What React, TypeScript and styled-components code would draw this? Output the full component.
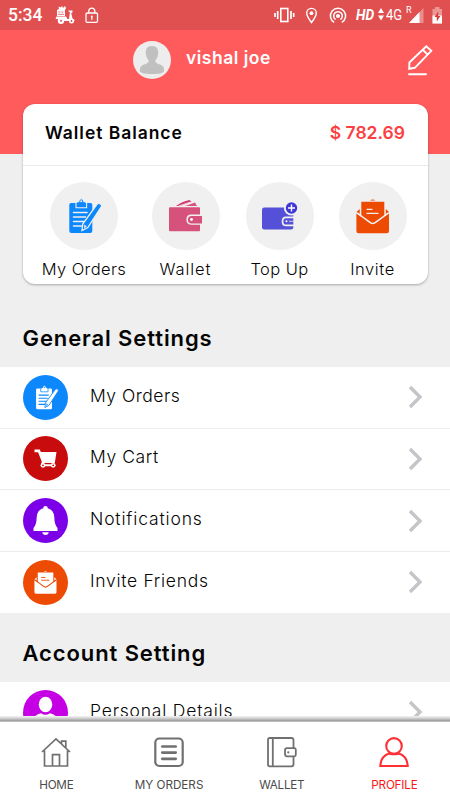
import React from 'react';
import styled, { createGlobalStyle } from 'styled-components';

const GlobalStyle = createGlobalStyle`
  * { box-sizing: border-box; }
  body { margin: 0; background: #efefef; font-family: Inter, "Open Sans", sans-serif; color: #050505; }
  svg { display: block; flex: none; }
`;

const Screen = styled.div`
  width: 450px;
  height: 800px;
  overflow: hidden;
  display: flex;
  flex-direction: column;
  background: #efefef;
`;

const StatusBar = styled.div`
  flex: none;
  height: 30px;
  background: #e05050;
  color: #fff;
  display: flex;
  align-items: center;
  justify-content: space-between;
  padding: 0 7px 0 8px;
`;
const StatusGroup = styled.div`
  height: 30px;
  display: flex;
  align-items: center;
`;
const Clock = styled.span`
  font: 500 17.5px/30px Roboto, sans-serif;
  width: 47px;
`;
const LockSlot = styled.span`
  margin-left: 10px;
`;
const Hd = styled.span`
  font: italic 700 15px/30px Roboto, sans-serif;
  width: 22px;
  margin-left: 9px;
  transform: scaleX(0.92);
  transform-origin: left;
`;
const Network = styled.span`
  font: 400 15.5px/30px Roboto, sans-serif;
  width: 20px;
  transform: scaleX(0.84);
  transform-origin: left;
`;
const Roaming = styled.span`
  font: 400 9px/20px Roboto, sans-serif;
  align-self: flex-start;
  width: 7px;
  margin-right: -5px;
`;
const BatterySlot = styled.span`
  margin-left: 8px;
`;

const Header = styled.header`
  flex: none;
  height: 124px;
  background: #ff5a5c;
  padding: 10.5px 17px 0 133px;
  display: flex;
  align-items: flex-start;
`;
const UserName = styled.div`
  color: #fff;
  font-size: 17.5px;
  line-height: 24px;
  font-weight: 600;
  margin: 5.5px 0 0 15px;
  letter-spacing: 0.5px;
  flex: 1;
`;
const EditButton = styled.div`
  padding-top: 3px;
`;

const WalletCard = styled.section`
  flex: none;
  position: relative;
  height: 180px;
  margin: -50px 22px 0 22.5px;
  background: #fff;
  border-radius: 12px;
  box-shadow: 0 1px 2.5px rgba(0, 0, 0, 0.3);
`;
const BalanceRow = styled.div`
  height: 62px;
  border-bottom: 1.5px solid #e9e9e9;
  padding: 0 23px 4px 22.5px;
  display: flex;
  align-items: center;
  justify-content: space-between;
  font-size: 17.5px;
  font-weight: 600;
`;
const Spaced = styled.span<{ $gap?: number }>`
  letter-spacing: ${p => p.$gap ?? 0}px;
  white-space: nowrap;
`;
const Amount = styled(Spaced)`
  color: #fc3f43;
`;
const Actions = styled.div`
  display: grid;
  grid-template-columns: 103px 100px 88px 98px;
  padding: 15.5px 0 0 10px;
`;
const Action = styled.div`
  display: flex;
  flex-direction: column;
  align-items: center;
`;
const ActionDisc = styled.div`
  width: 68px;
  height: 68px;
  border-radius: 50%;
  background: #f0f0f0;
`;
const ActionLabel = styled(Spaced)`
  margin-top: 7px;
  font-size: 16.5px;
  line-height: 24px;
  font-weight: 350;
`;

const SectionTitle = styled.h2<{ $height: number }>`
  flex: none;
  margin: 0;
  height: ${p => p.$height}px;
  padding: 0 22.5px 15px;
  display: flex;
  align-items: flex-end;
  font-size: 22px;
  line-height: 28px;
  font-weight: 600;
`;
const Row = styled.div<{ $last?: boolean }>`
  flex: none;
  height: ${p => (p.$last ? 61 : 61.66)}px;
  background: #fff;
  border-bottom: ${p => (p.$last ? 0 : 1.6)}px solid #ededed;
  padding: 0 26px 0 22.5px;
  display: flex;
  align-items: center;
`;
const RowDisc = styled.div<{ $color: string }>`
  width: 45px;
  height: 45px;
  border-radius: 50%;
  background: ${p => p.$color};
`;
const RowLabel = styled.div`
  flex: 1;
  margin-left: 22.5px;
  padding-bottom: 3px;
  font-size: 17.5px;
  line-height: 26px;
  font-weight: 350;
`;
const Clipped = styled.div`
  flex: none;
  height: 34px;
  overflow: hidden;
`;

const TabShadow = styled.div`
  flex: none;
  height: 6px;
  background: linear-gradient(#f4f4f4 0%, #d4d4d4 35%, #a2a2a2 75%, #8c8c8c 84%, #f4f4f4 100%);
`;
const TabBar = styled.nav`
  flex: 1;
  background: #fff;
  display: grid;
  grid-template-columns: repeat(4, 112.7px);
`;
const Tab = styled.div<{ $active?: boolean }>`
  display: flex;
  flex-direction: column;
  align-items: center;
  padding-top: 15.5px;
  color: ${p => (p.$active ? '#fc3036' : '#707070')};
`;
const TabLabel = styled(Spaced)<{ $active?: boolean }>`
  margin-top: 7.5px;
  font-size: 11.7px;
  line-height: 18px;
  color: ${p => (p.$active ? '#fc161c' : '#4b4b4b')};
`;

type DrawProps = { size?: number; fg: string; bg: string; crop?: string };

const OrdersIcon = ({ size = 68, fg, bg, crop = '0 0 68 68' }: DrawProps) => (
  <svg width={size} height={size} viewBox={crop}>
    <path d="M21 21h19.5q1.8 0 1.8 1.8V49q0 2-2 2H21.3q-2 0-2-2V22.8Q19.3 21 21 21z" fill={fg} />
    <path d="M26 25.8v-4q0-2 2-2h.7q.3-3 2.6-3t2.6 3h.7q2 0 2 2v4z" fill={fg} stroke={bg} strokeWidth="1.1" />
    <circle cx="31.2" cy="19.3" r="1" fill={bg} />
    <path d="M23.5 30.5H37M23.5 35H35.5M23.5 39.5h11M23.5 44h8" stroke={bg} strokeWidth="1.6" strokeLinecap="round" />
    <path d="M32 48.5l.7-6.5L47 22.3q1-1.3 2.4-.8 2.8 1 2.2 2.8L37.8 45.5z" fill={fg} stroke={bg} strokeWidth="1.3" />
    <path d="M34 46.2l.3-3.6 2.4 1.8z" fill={bg} />
  </svg>
);

const InviteIcon = ({ size = 68, fg, bg, crop = '0 0 68 68' }: DrawProps) => (
  <svg width={size} height={size} viewBox={crop}>
    <path d="M31 18.5q2.7-2.2 5.4 0z" fill={fg} />
    <path d="M22.3 19.8h23v15l-11.5 7-11.5-6z" fill={fg} />
    <path d="M28 27.3h5M28 31.4h11" stroke={bg} strokeWidth="1.3" strokeLinecap="round" />
    <path d="M20.7 27l-3.2 3 3.2 2zM46.8 27l3.2 3-3.2 2z" fill={fg} />
    <path d="M17.4 31.5L31 41q2.8 2 5.5 0l13.5-9.5V49q0 2.2-2.2 2.2H19.6q-2.2 0-2.2-2.2z" fill={fg} />
    <path d="M18.2 31L31 40.4q2.8 2 5.5 0L49.3 31" fill="none" stroke={bg} strokeWidth="1.5" />
  </svg>
);

const CardWalletIcon = () => (
  <svg width="68" height="68" viewBox="0 0 68 68">
    <path d="M24 24q6-4.5 13.5-6l2 1.8L28 24z" fill="#d42f6b" />
    <path d="M26.500 24l12-4" stroke="#f0f0f0" strokeWidth=".8" />
    <path d="M33 24l10-3.500 2 3.500z" fill="#d9537c" />
    <rect x="17" y="25.200" width="31" height="24" rx="1" fill="#d6517b" />
    <path d="M51 32.500H39q-4.600 0-4.600 5.100T39 42.700h12z" fill="#f0f0f0" />
    <path d="M50 34H39.500q-3.600 0-3.600 3.700t3.600 3.700H50z" fill="#d6517b" />
    <circle cx="39.500" cy="37.500" r="1.400" fill="#fff" />
  </svg>
);

const TopUpIcon = () => (
  <svg width="68" height="68" viewBox="0 0 68 68">
    <rect x="16" y="25.500" width="31.300" height="22" rx="2.200" fill="#5550d8" />
    <circle cx="45.500" cy="26" r="7.600" fill="#f0f0f0" />
    <circle cx="45.500" cy="26" r="5.700" fill="#4038d6" />
    <path d="M45.500 22.500v7M42 26h7" stroke="#fff" strokeWidth="1.400" />
    <path d="M48 34.500h-8q-4.300 0-4.300 4.900t4.300 4.900h8z" fill="#f0f0f0" />
    <path d="M47.300 36.200H40q-2.600 0-2.600 3.200t2.600 3.200h7.300z" fill="#5550d8" />
    <circle cx="40.500" cy="39.300" r="1" fill="#fff" />
    <path d="M43 39.300h4.500" stroke="#f0f0f0" strokeWidth=".8" />
  </svg>
);

const CartIcon = () => (
  <svg width="45" height="45" viewBox="0 0 45 45">
    <path d="M11.500 13.500h5.300l1 2.500h15.700l-1.700 11H21l-.6 1.300H31v2H17.600l1.200-4.500-3.700-9.500h-3.600z" fill="#fff" />
    <circle cx="20" cy="29.300" r="2.400" fill="#fff" /><circle cx="30.200" cy="29.300" r="2.400" fill="#fff" />
    <circle cx="20" cy="29.300" r=".9" fill="#c80b0d" /><circle cx="30.200" cy="29.300" r=".9" fill="#c80b0d" />
  </svg>
);

const BellIcon = () => (
  <svg width="45" height="45" viewBox="0 0 45 45" fill="#fff">
    <path d="M20.200 10.300q0-2.300 2.300-2.300t2.300 2.300q6 1.800 6.500 8.700.1 7.500 3.200 11V33h-24v-3q3.100-3.500 3.200-11 .5-6.900 6.500-8.700z" />
    <path d="M19.300 34.300h6.400q-.4 2.600-3.200 2.600t-3.200-2.600z" />
  </svg>
);

const PersonIcon = () => (
  <svg width="45" height="45" viewBox="0 0 45 45" fill="#fff">
    <ellipse cx="22.500" cy="14.500" rx="6.800" ry="7.700" />
    <path d="M9 36q0-11 9-12.800 4.500 3 9 0Q36 25 36 36z" />
  </svg>
);

const Chevron = () => (
  <svg width="16" height="24" viewBox="0 0 16 24">
    <path d="M2 2l10 10L2 22" fill="none" stroke="#c5c5c9" strokeWidth="3.400" />
  </svg>
);

const Avatar = () => (
  <svg width="38" height="38" viewBox="0 0 38 38">
    <circle cx="19" cy="19" r="19" fill="#ededed" />
    <path d="M19 5c5 0 6.500 3.500 6.200 7.500-.3 3-1.200 5-2.700 6.500-.5 2 .3 3 3 4 4 1.500 6 2.500 5.500 7.500-.8 1.700-5 2.500-12 2.500s-11.200-.8-12-2.500c-.5-5 1.500-6 5.500-7.500 2.700-1 3.500-2 3-4-1.500-1.500-2.400-3.500-2.700-6.500C12.500 8.500 14 5 19 5z" fill="#c0c0c0" />
  </svg>
);

const EditIcon = () => (
  <svg width="26" height="32" viewBox="0 0 26 32" fill="none" stroke="#fff" strokeWidth="1.900">
    <path d="M2.200 24.800l.2-6.300L19.300 2.300l5 4.500L7.800 23.800zM15.700 5.700l5 4.900" />
    <path d="M2 30.300h17" strokeLinecap="round" />
  </svg>
);

const ScooterIcon = () => (
  <svg width="20" height="20" viewBox="0 0 20 20" fill="#fff">
    <path d="M2 5l2-1-.5-2.500 2 1L7 1l1 2 2-2 1 2-1 2v6H2z" />
    <path d="M1.500 11.500h9.500l1.500 2.500h1.500L15 7l-1.500-.5V5.500h4v2l-1.300.5 1.300 5.500 2 1.500v1H8.500L7 14H.5z" />
    <circle cx="6" cy="15.800" r="3.200" /><circle cx="16.500" cy="16" r="2.500" />
    <path d="M3.300 7h2m1 0h2M3 9.300h6" stroke="#e05050" strokeWidth=".8" />
    <circle cx="6" cy="15.800" r="1" fill="#e05050" /><circle cx="16.500" cy="16" r=".9" fill="#e05050" />
  </svg>
);

const LockIcon = () => (
  <svg width="14" height="17" viewBox="0 0 14 17" fill="none" stroke="#fff" strokeWidth="1.300">
    <rect x="1" y="6" width="11.500" height="9.300" rx="1.200" />
    <path d="M3.700 6V4.200a3 3 0 016.100 0V6M6.800 9.800v3" /><circle cx="6.800" cy="9.600" r="1" fill="#fff" stroke="none" />
  </svg>
);

const StatusGlyphs = () => (
  <svg width="73" height="20" viewBox="0 0 73 20" fill="none" stroke="#fff">
    <rect x="6.800" y="3.500" width="7" height="13" strokeWidth="1.600" />
    <path d="M1 8v4M3.700 6v8M17 6v8M19.700 8v4" strokeWidth="1.700" />
    <path d="M37.500 17.500c-3-4-4.800-6.500-4.800-9.300a4.800 4.800 0 019.600 0c0 2.800-1.800 5.300-4.800 9.300z" strokeWidth="1.400" />
    <circle cx="37.500" cy="8.200" r="1.900" fill="#fff" stroke="none" />
    <circle cx="64" cy="11" r="2" fill="#fff" stroke="none" />
    <path d="M60.200 17.400a7.600 7.600 0 117.600 0M61.600 14.500a4.300 4.300 0 114.800 0" strokeWidth="1.500" />
  </svg>
);

const DataArrows = () => (
  <svg width="8" height="16" viewBox="0 0 8 16" fill="#fff"><path d="M0 6L3 1l3 5zM0 8.500h6L3 13.500z" /></svg>
);
const SignalIcon = () => (
  <svg width="16" height="17" viewBox="0 0 16 17"><path d="M15.500 1v15H1z" fill="#fff" opacity=".35" /><path d="M11.500 5v11H1z" fill="#fff" /></svg>
);
const BatteryIcon = () => (
  <svg width="11" height="18" viewBox="0 0 11 18">
    <path d="M3 1h4.500v2H10v14.500H.5V3H3z" fill="#fff" opacity=".4" />
    <path d="M.5 9.500H10v8H.5z" fill="#fff" /><path d="M6.200 5.500L2.500 11h2.300v4.500L8.400 10H6.200z" fill="#d93b3d" />
  </svg>
);

const HomeTabIcon = () => (
  <svg width="30" height="31" viewBox="0 0 30 31" fill="none" stroke="currentColor" strokeWidth="1.700">
    <path d="M1 15L15 2l14 13M3.500 13.500v15.500h23V13.500M11.500 29V17.700h7V29M20.500 7V4.200h4.300v6.800" />
  </svg>
);
const OrdersTabIcon = () => (
  <svg width="30" height="31" viewBox="0 0 30 31" fill="none" stroke="currentColor">
    <rect x="1.300" y="1.500" width="27.400" height="27.500" rx="4" strokeWidth="2.200" />
    <path d="M8.300 9.500h13.400M8.300 15.600h13.400M8.300 21.800h13.400" strokeWidth="2.700" strokeLinecap="round" />
  </svg>
);
const WalletTabIcon = () => (
  <svg width="30" height="31" viewBox="0 0 30 31" fill="none" stroke="currentColor" strokeWidth="1.800">
    <path d="M26.500 11V3q0-2-2-2H2.800q-1.800 0-1.800 2v24.300q0 2 1.800 2h21.700q2 0 2-2V19.500M5.800 1v28.300" />
    <path d="M20 11.200h7.300q1.500 0 1.500 1.500v5.100q0 1.500-1.500 1.500H20q-2 0-2-2.200v-3.700q0-2.200 2-2.200z" />
    <circle cx="21.300" cy="15.400" r="1.100" fill="currentColor" stroke="none" />
  </svg>
);
const ProfileTabIcon = () => (
  <svg width="30" height="31" viewBox="0 0 30 31" fill="none" stroke="currentColor" strokeWidth="2.100">
    <circle cx="15" cy="8.900" r="7.800" /><path d="M1.300 29q.7-10 9-12.400 4.700 1 9.400 0 8.300 2.400 9 12.400z" />
  </svg>
);

export default function App() {
  return (
    <Screen>
      <GlobalStyle />
      <StatusBar>
        <StatusGroup>
          <Clock>5:34</Clock>
          <ScooterIcon />
          <LockSlot><LockIcon /></LockSlot>
        </StatusGroup>
        <StatusGroup>
          <StatusGlyphs />
          <Hd>HD</Hd>
          <DataArrows />
          <Network>4G</Network>
          <Roaming>R</Roaming>
          <SignalIcon />
          <BatterySlot><BatteryIcon /></BatterySlot>
        </StatusGroup>
      </StatusBar>
      <Header>
        <Avatar />
        <UserName>vishal joe</UserName>
        <EditButton><EditIcon /></EditButton>
      </Header>
      <WalletCard>
        <BalanceRow>
          <Spaced $gap={0.95}>Wallet Balance</Spaced>
          <Amount>$ 782.69</Amount>
        </BalanceRow>
        <Actions>
          <Action><ActionDisc><OrdersIcon fg="#0d87fc" bg="#f0f0f0" /></ActionDisc><ActionLabel $gap={0.4}>My Orders</ActionLabel></Action>
          <Action><ActionDisc><CardWalletIcon /></ActionDisc><ActionLabel $gap={0.9}>Wallet</ActionLabel></Action>
          <Action><ActionDisc><TopUpIcon /></ActionDisc><ActionLabel $gap={0.4}>Top Up</ActionLabel></Action>
          <Action><ActionDisc><InviteIcon fg="#ed4a03" bg="#f0f0f0" /></ActionDisc><ActionLabel $gap={0.6}>Invite</ActionLabel></Action>
        </Actions>
      </WalletCard>
      <SectionTitle $height={83}><Spaced $gap={0.9}>General Settings</Spaced></SectionTitle>
      <Row><RowDisc $color="#0d87fc"><OrdersIcon size={45} crop="0.4 1.5 65 65" fg="#fff" bg="#0d87fc" /></RowDisc><RowLabel><Spaced $gap={0.5}>My Orders</Spaced></RowLabel><Chevron /></Row>
      <Row><RowDisc $color="#c80b0d"><CartIcon /></RowDisc><RowLabel><Spaced $gap={0.6}>My Cart</Spaced></RowLabel><Chevron /></Row>
      <Row><RowDisc $color="#7b00e8"><BellIcon /></RowDisc><RowLabel><Spaced $gap={0.85}>Notifications</Spaced></RowLabel><Chevron /></Row>
      <Row $last><RowDisc $color="#ed4a03"><InviteIcon size={45} crop="0.5 1.5 66.5 66.5" fg="#fff" bg="#ed4a03" /></RowDisc><RowLabel><Spaced $gap={0.7}>Invite Friends</Spaced></RowLabel><Chevron /></Row>
      <SectionTitle $height={69}><Spaced $gap={0.9}>Account Setting</Spaced></SectionTitle>
      <Clipped>
        <Row><RowDisc $color="#c600e4"><PersonIcon /></RowDisc><RowLabel><Spaced $gap={0.8}>Personal Details</Spaced></RowLabel><Chevron /></Row>
      </Clipped>
      <TabShadow />
      <TabBar>
        <Tab><HomeTabIcon /><TabLabel $gap={-0.2}>HOME</TabLabel></Tab>
        <Tab><OrdersTabIcon /><TabLabel>MY ORDERS</TabLabel></Tab>
        <Tab><WalletTabIcon /><TabLabel $gap={-0.3}>WALLET</TabLabel></Tab>
        <Tab $active><ProfileTabIcon /><TabLabel $gap={-0.2} $active>PROFILE</TabLabel></Tab>
      </TabBar>
    </Screen>
  );
}
